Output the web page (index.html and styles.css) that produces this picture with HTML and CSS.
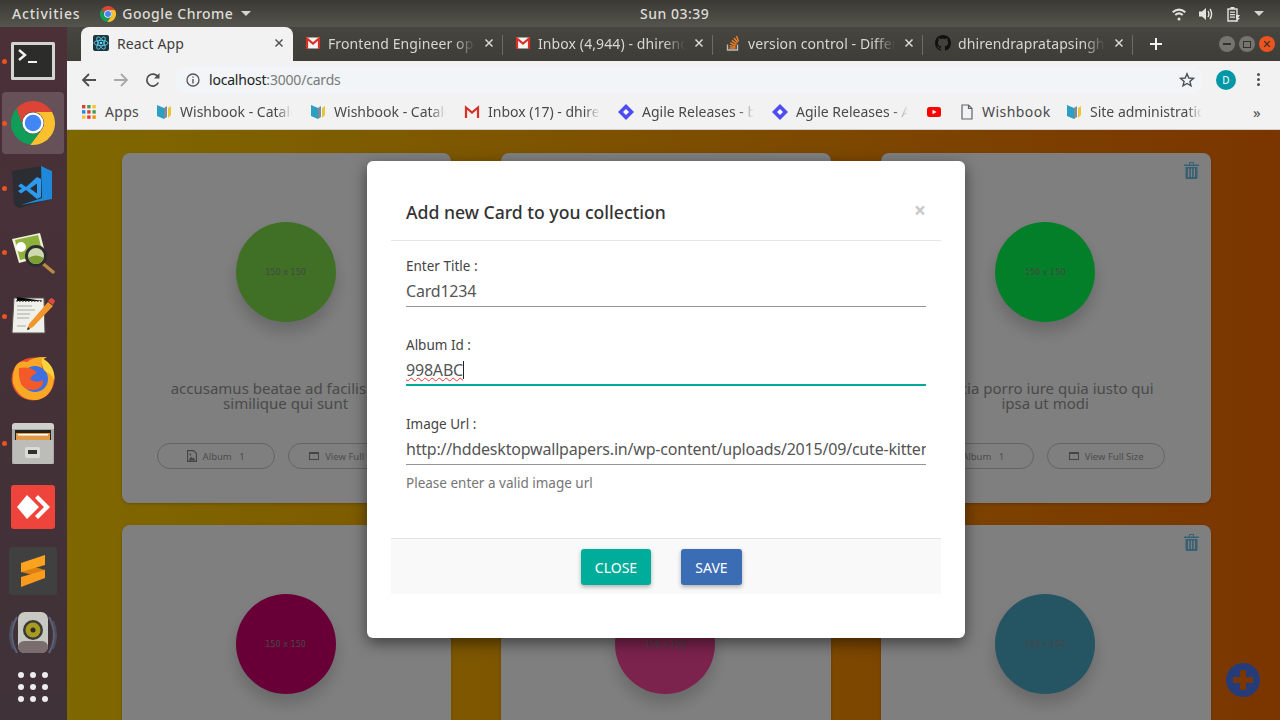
FILE: index.html
```html
<!DOCTYPE html>
<html lang="en">
<head>
<meta charset="utf-8">
<title>React App</title>
<link rel="stylesheet" href="styles.css">
</head>
<body>
<svg class="defs" width="0" height="0" aria-hidden="true">
  <defs>
    <symbol id="chrome" viewBox="0 0 48 48">
      <path fill="#db4437" d="M6 8A24 24 0 0 1 44.8 12H24A12 12 0 0 0 13.6 30Z"/>
      <path fill="#fbc02d" d="M44.8 12A24 24 0 0 1 21 47.8L34.4 30A12 12 0 0 0 24 12Z"/>
      <path fill="#0f9d58" d="M6 8A24 24 0 0 0 21 47.8L34.4 30A12 12 0 0 1 13.6 30Z"/>
      <circle cx="24" cy="24" r="11.5" fill="#fff"/>
      <circle cx="24" cy="24" r="9" fill="#4285f4"/>
    </symbol>
    <symbol id="gmail" viewBox="0 0 16 16">
      <rect x="1" y="2.5" width="14" height="11" fill="#f3f3f3"/>
      <path fill="none" stroke="#d93025" stroke-width="2.2" d="M2 14V3.5L8 8.5L14 3.5V14"/>
    </symbol>
    <symbol id="wishbook" viewBox="0 0 16 16">
      <path fill="#2b9fc4" d="M1 1L8 4V15L1 12Z"/>
      <path fill="#7f8b95" d="M8 4L11 2V13L8 15Z"/>
      <path fill="#e8c53a" d="M12 4L15 2V11L12 14Z"/>
    </symbol>
    <symbol id="jira" viewBox="0 0 16 16">
      <path fill="#4c4cf5" d="M8 0L16 8L8 16L0 8Z"/>
      <path fill="#fff" d="M8 5L11 8L8 11L5 8Z"/>
    </symbol>
    <symbol id="close" viewBox="0 0 10 10">
      <path fill="none" stroke="currentColor" stroke-width="1.5" d="M1.500 1.500L8.500 8.500M8.500 1.500L1.500 8.500"/>
    </symbol>
    <symbol id="trash" viewBox="0 0 15 17">
      <path fill="currentColor" d="M0 2.500H5V.8Q5 0 6 0H9Q10 0 10 .8V2.500H15V4H0ZM6 1V2.500H9V1ZM1.500 5H13.500V15.500Q13.500 17 12 17H3Q1.500 17 1.500 15.500ZM4 6.500V15H5.300V6.500ZM6.900 6.500V15H8.100V6.500ZM9.700 6.500V15H11V6.500Z" fill-rule="evenodd"/>
    </symbol>
    <symbol id="imgfile" viewBox="0 0 10 12">
      <path fill="none" stroke="currentColor" stroke-width="1.1" d="M.6.6H6.500L9.400 3.500V11.400H.6Z"/>
      <path fill="currentColor" d="M1.500 10.500L4 6.500L5.500 8.500L6.500 7.500L8.500 10.500Z"/>
      <circle cx="3.400" cy="4.400" r="1" fill="currentColor"/>
    </symbol>
    <symbol id="window" viewBox="0 0 10 10">
      <path fill="currentColor" fill-rule="evenodd" d="M0 1H10V9H0ZM1 3V8H9V3Z"/>
    </symbol>
  </defs>
</svg>

<header class="topbar">
  <span class="top-activities">Activities</span>
  <span class="top-app">
    <svg class="top-chrome"><use href="#chrome"/></svg>
    Google Chrome
    <i class="caret-down"></i>
  </span>
  <span class="top-clock">Sun 03:39</span>
  <span class="top-tray">
    <svg class="tray-icon" viewBox="0 0 16 16"><path fill="#e4e3de" d="M8 14.500a1.500 1.500 0 1 0 0-3 1.500 1.500 0 0 0 0 3ZM1 5.500Q8-.5 15 5.500L13.600 7Q8 2.500 2.400 7ZM3.600 8.200Q8 4.500 12.400 8.200L11 9.700Q8 7.200 5 9.700Z"/></svg>
    <svg class="tray-icon" viewBox="0 0 16 16"><path fill="#e4e3de" d="M1 5.500H4L8 2V14L4 10.500H1Z"/><path fill="none" stroke="#e4e3de" stroke-width="1.400" d="M10 5Q11.800 8 10 11M12 3Q15.200 8 12 13"/></svg>
    <svg class="tray-icon" viewBox="0 0 16 16"><path fill="none" stroke="#e4e3de" stroke-width="1.400" d="M3 3H12V15H3Z"/><path fill="#e4e3de" d="M5.500 1H9.500V3H5.500ZM5 5.500H10V6.700H5ZM5 8H10V9.200H5ZM5 10.500H10V11.700H5ZM11 9L15 9L13 12H15L11 16L12.400 12.500H11Z"/></svg>
    <i class="caret-down"></i>
  </span>
</header>

<div class="desktop">
  <nav class="dock">
    <div class="dock-item running">
      <svg class="dock-icon" viewBox="0 0 44 44"><rect x="0" y="3" width="44" height="38" rx="1.500" fill="#d4d4d0"/><rect x="3" y="6" width="38" height="32" fill="#2c2c2a"/><path fill="none" stroke="#f2f2f2" stroke-width="2.400" d="M8 11L14 16L8 21"/><rect x="17" y="22" width="9" height="2" fill="#f2f2f2"/></svg>
    </div>
    <div class="dock-item running active">
      <svg class="dock-icon"><use href="#chrome"/></svg>
    </div>
    <div class="dock-item running">
      <svg class="dock-icon" viewBox="0 0 44 44"><path fill="#2b2d33" d="M1 5L31 0L40 4V33L8 42L3 39Z"/><path fill="#1f88d9" d="M30 0L41 5V33L10 39L31 32Z"/><path fill="#2c9bef" fill-rule="evenodd" d="M7 20L10 17.500L15 21L26 11L30 13V31L26 33L15 24L10 27.500L7 25L11 22.500ZM26 17.500L19 22.500L26 27.500Z"/></svg>
    </div>
    <div class="dock-item running">
      <svg class="dock-icon" viewBox="0 0 44 44"><path fill="#eef0d8" d="M1 9L29 3L35 26L8 33Z"/><path fill="#8fb13c" d="M4 10L27 5L32 24L9 30Z"/><circle cx="10" cy="17" r="5" fill="#fff"/><path stroke="#b98a45" stroke-width="3.400" stroke-linecap="round" d="M30 32L42 42"/><circle cx="25" cy="26" r="9.500" fill="#cfd9b0" stroke="#2d2d2d" stroke-width="3"/><path fill="#7d9c33" d="M17 28Q25 23 33 28Q30 34 25 34Q20 34 17 28Z"/></svg>
    </div>
    <div class="dock-item running">
      <svg class="dock-icon" viewBox="0 0 44 44"><path fill="#f0f0ea" stroke="#55534f" d="M3 4H33L34 39H1Z"/><path stroke="#333" stroke-width="1.300" stroke-dasharray="1.600 1.400" d="M6 3V7H32"/><path stroke="#a9a9a4" d="M6 12H21M6 16H24M6 20H19M6 24H18M6 32H15"/><path fill="#f0962a" d="M37 8L42 12L22 33L16 36L18 30Z"/><path fill="#e24a3d" d="M37 7L40 4Q42 4 44 7L42 11Z"/><path fill="#222" d="M16 36L17 33L19 35Z"/></svg>
    </div>
    <div class="dock-item">
      <svg class="dock-icon" viewBox="0 0 44 44"><circle cx="22" cy="22" r="21.500" fill="#ea4a2e"/><path fill="#f9a825" d="M2 26Q8 44 26 43Q41 40 43 22Q43 14 38 8Q39 18 32 14Q28 4 36 0Q24 -1 16 5Q8 3 4 10Q1 18 2 26Z"/><circle cx="24" cy="22" r="13" fill="#3f6fe0"/><path fill="#f4592a" d="M8 11Q20 9 26 16Q21 18 19 22Q25 27 32 23Q33 31 23 33Q11 33 9 24Q7 17 8 11Z"/><path fill="#fbd33c" d="M31 1Q44 8 43.500 23Q40 16 35 15Q30 11 31 1Z"/></svg>
    </div>
    <div class="dock-item running">
      <svg class="dock-icon" viewBox="0 0 44 44"><path fill="#cfcfcb" d="M1 5Q1 2 4 2H40Q43 2 43 5V12H1Z"/><rect x="1" y="8" width="42" height="35" rx="1" fill="#a9a9a5"/><rect x="4" y="9" width="36" height="11" fill="#23231f"/><rect x="5" y="12" width="34" height="7" fill="#e29a49"/><rect x="7" y="13" width="30" height="1.500" fill="#fff"/><path fill="#bcbcb8" d="M2 19H42V41Q42 43 40 43H4Q2 43 2 41Z"/><rect x="14" y="26" width="15" height="11" rx="2" fill="#dadad6"/><rect x="17" y="29" width="9" height="4" fill="#2f2f2d"/></svg>
    </div>
    <div class="dock-item">
      <svg class="dock-icon" viewBox="0 0 44 44"><rect width="44" height="44" rx="3" fill="#ef443b"/><path fill="#fff" d="M16 10L28 22L16 34L6 22Z"/><path fill="#fff" d="M27 10L39 22L27 34L24 31L33 22L24 13Z"/></svg>
    </div>
    <div class="dock-item">
      <svg class="dock-icon-lg" viewBox="0 0 48 48"><rect width="48" height="48" rx="3" fill="#404040"/><path fill="#d9800f" d="M12 16L36 23V31L12 25Z"/><path fill="#fba21f" d="M12 16L36 8V18L12 25Z"/><path fill="#f99b1c" d="M12 30L36 23V31L12 40Z"/></svg>
    </div>
    <div class="dock-item">
      <svg class="dock-icon-lg" viewBox="0 0 48 48"><path fill="none" stroke="#5c6378" stroke-width="2" d="M8 6Q-2 24 8 42M40 6Q50 24 40 42"/><path fill="none" stroke="#4d4f5e" stroke-width="2" d="M4 10Q-2 24 4 38M44 10Q50 24 44 38"/><rect x="9" y="1" width="30" height="41" rx="7" fill="#c9c9c4"/><circle cx="24" cy="19" r="10" fill="#3a3a38"/><circle cx="24" cy="19" r="7.500" fill="#a99a22"/><circle cx="24" cy="19" r="2.500" fill="#2d2d2b"/><rect x="9" y="30" width="30" height="12" rx="6" fill="#7a6d6e"/></svg>
    </div>
    <div class="dock-grid">
      <i></i><i></i><i></i><i></i><i></i><i></i><i></i><i></i><i></i>
    </div>
  </nav>

  <main class="browser">
    <div class="tabstrip">
      <div class="tab tab-active">
        <svg class="fav" viewBox="0 0 16 16"><rect width="16" height="16" rx="2" fill="#20343c"/><g fill="none" stroke="#61dafb" stroke-width=".8"><ellipse cx="8" cy="8" rx="7" ry="2.700"/><ellipse cx="8" cy="8" rx="7" ry="2.700" transform="rotate(60 8 8)"/><ellipse cx="8" cy="8" rx="7" ry="2.700" transform="rotate(120 8 8)"/></g><circle cx="8" cy="8" r="1.300" fill="#61dafb"/></svg>
        <span class="tab-title">React App</span>
        <svg class="tab-x"><use href="#close"/></svg>
      </div>
      <div class="tab">
        <svg class="fav"><use href="#gmail"/></svg>
        <span class="tab-title fade">Frontend Engineer opening</span>
        <svg class="tab-x"><use href="#close"/></svg>
      </div>
      <div class="tab">
        <svg class="fav"><use href="#gmail"/></svg>
        <span class="tab-title fade">Inbox (4,944) - dhirendra</span>
        <svg class="tab-x"><use href="#close"/></svg>
      </div>
      <div class="tab">
        <svg class="fav" viewBox="0 0 16 16"><path fill="none" stroke="#bcbbbb" stroke-width="1.400" d="M2.500 9.500V15H12.500V9.500"/><path fill="none" stroke="#f48024" stroke-width="1.400" d="M4.500 13H10.500M4.600 10.600L10.500 11.600M5.300 8L10.800 10.200M6.800 5.400L11.600 8.800M9 3L12.600 7.600M11.500 1L13.500 6.500"/></svg>
        <span class="tab-title fade">version control - Difference</span>
        <svg class="tab-x"><use href="#close"/></svg>
      </div>
      <div class="tab">
        <svg class="fav" viewBox="0 0 16 16"><path fill="#111" d="M8 0C3.580 0 0 3.580 0 8c0 3.540 2.290 6.530 5.470 7.590.4.070.55-.17.55-.38 0-.19-.01-.82-.01-1.490-2.010.37-2.530-.49-2.690-.94-.09-.23-.48-.94-.82-1.130-.28-.15-.68-.52-.01-.53.63-.01 1.080.58 1.230.82.72 1.210 1.870.87 2.330.66.07-.52.28-.87.51-1.070-1.780-.2-3.640-.89-3.640-3.950 0-.87.31-1.590.82-2.150-.08-.2-.36-1.020.08-2.120 0 0 .67-.21 2.200.82.64-.18 1.320-.27 2-.27.68 0 1.360.09 2 .27 1.530-1.040 2.200-.82 2.200-.82.44 1.100.16 1.920.08 2.120.51.56.82 1.270.82 2.150 0 3.070-1.870 3.750-3.650 3.950.29.25.54.73.54 1.480 0 1.070-.01 1.930-.01 2.200 0 .21.15.46.55.38A8.013 8.013 0 0016 8c0-4.420-3.580-8-8-8z"/></svg>
        <span class="tab-title fade">dhirendrapratapsingh/react</span>
        <svg class="tab-x"><use href="#close"/></svg>
      </div>
      <svg class="tab-plus" viewBox="0 0 14 14"><path stroke="#f2f2f0" stroke-width="2" d="M7 1V13M1 7H13"/></svg>
      <div class="win-btns">
        <span class="win-btn"><i class="win-min"></i></span>
        <span class="win-btn"><i class="win-max"></i></span>
        <span class="win-btn win-close"><svg class="win-x"><use href="#close"/></svg></span>
      </div>
    </div>

    <div class="toolbar">
      <svg class="tool" viewBox="0 0 16 16"><path fill="none" stroke="#4f4f4f" stroke-width="1.800" d="M15 8H2M8 2L2 8L8 14"/></svg>
      <svg class="tool" viewBox="0 0 16 16"><path fill="none" stroke="#a9a9a9" stroke-width="1.800" d="M1 8H14M8 2L14 8L8 14"/></svg>
      <svg class="tool" viewBox="0 0 16 16"><path fill="none" stroke="#4f4f4f" stroke-width="1.700" d="M13.300 10.500A6 6 0 1 1 13 5"/><path fill="#4f4f4f" d="M14.500 1V6.500H9Z"/></svg>
      <div class="omnibox">
        <svg class="omni-info" viewBox="0 0 14 14"><circle cx="7" cy="7" r="6" fill="none" stroke="#555" stroke-width="1.300"/><path fill="#555" d="M6.300 6H7.700V10.500H6.300ZM6.300 3.400H7.700V4.800H6.300Z"/></svg>
        <span class="url"><b class="url-host">localhost</b>:3000/cards</span>
        <svg class="omni-star" viewBox="0 0 16 16"><path fill="none" stroke="#4f4f4f" stroke-width="1.400" d="M8 1.800L9.800 6L14.400 6.400L10.900 9.400L12 13.900L8 11.500L4 13.900L5.100 9.400L1.600 6.400L6.200 6Z"/></svg>
      </div>
      <span class="avatar">D</span>
      <span class="kebab"><i></i><i></i><i></i></span>
    </div>

    <div class="bookmarks">
      <div class="bm bm-apps">
        <svg class="bm-ic" viewBox="0 0 14 14"><path fill="#e53935" d="M0 0h3.400v3.400H0z"/><path fill="#43a047" d="M5.200 0h3.400v3.400H5.200z"/><path fill="#fbc02d" d="M10.400 0h3.400v3.400h-3.400z"/><path fill="#1e88e5" d="M0 5.200h3.400v3.400H0z"/><path fill="#e53935" d="M5.200 5.200h3.400v3.400H5.200z"/><path fill="#43a047" d="M10.400 5.200h3.400v3.400h-3.400z"/><path fill="#fbc02d" d="M0 10.400h3.400v3.400H0z"/><path fill="#e53935" d="M5.200 10.400h3.400v3.400H5.200z"/><path fill="#fb8c00" d="M10.400 10.400h3.400v3.400h-3.400z"/></svg>
        <span>Apps</span>
      </div>
      <div class="bm"><svg class="bm-ic"><use href="#wishbook"/></svg><span class="bm-text">Wishbook - Catalog</span></div>
      <div class="bm"><svg class="bm-ic"><use href="#wishbook"/></svg><span class="bm-text">Wishbook - Catalog</span></div>
      <div class="bm"><svg class="bm-ic"><use href="#gmail"/></svg><span class="bm-text">Inbox (17) - dhirendra</span></div>
      <div class="bm"><svg class="bm-ic"><use href="#jira"/></svg><span class="bm-text">Agile Releases - board</span></div>
      <div class="bm"><svg class="bm-ic"><use href="#jira"/></svg><span class="bm-text">Agile Releases - Agile</span></div>
      <div class="bm bm-yt"><svg class="bm-ic" viewBox="0 0 16 16"><rect x="1" y="3" width="14" height="10" rx="2.500" fill="#f00"/><path fill="#fff" d="M6.500 5.800L10.500 8L6.500 10.200Z"/></svg></div>
      <div class="bm bm-doc"><svg class="bm-ic" viewBox="0 0 14 16"><path fill="none" stroke="#5f6368" stroke-width="1.200" d="M2 1H8.500L12 4.500V15H2ZM8.500 1V4.500H12"/></svg><span>Wishbook</span></div>
      <div class="bm"><svg class="bm-ic"><use href="#wishbook"/></svg><span class="bm-text">Site administration</span></div>
      <span class="bm-more">»</span>
    </div>

    <div class="page">
      <div class="card-grid">
        <article class="card">
          <svg class="card-trash"><use href="#trash"/></svg>
          <div class="thumb thumb-green">150 x 150</div>
          <p class="card-title">accusamus beatae ad facilis cum similique qui sunt</p>
          <div class="card-actions">
            <span class="pill"><svg class="pill-ic"><use href="#imgfile"/></svg>Album &nbsp; 1</span>
            <span class="pill"><svg class="pill-ic"><use href="#window"/></svg>View Full Size</span>
          </div>
        </article>
        <article class="card">
          <svg class="card-trash"><use href="#trash"/></svg>
          <div class="thumb thumb-purple">150 x 150</div>
          <p class="card-title">reprehenderit est deserunt velit ipsam</p>
          <div class="card-actions">
            <span class="pill"><svg class="pill-ic"><use href="#imgfile"/></svg>Album &nbsp; 1</span>
            <span class="pill"><svg class="pill-ic"><use href="#window"/></svg>View Full Size</span>
          </div>
        </article>
        <article class="card">
          <svg class="card-trash"><use href="#trash"/></svg>
          <div class="thumb thumb-lime">150 x 150</div>
          <p class="card-title">officia porro iure quia iusto qui ipsa ut modi</p>
          <div class="card-actions">
            <span class="pill"><svg class="pill-ic"><use href="#imgfile"/></svg>Album &nbsp; 1</span>
            <span class="pill"><svg class="pill-ic"><use href="#window"/></svg>View Full Size</span>
          </div>
        </article>
        <article class="card">
          <svg class="card-trash"><use href="#trash"/></svg>
          <div class="thumb thumb-magenta">150 x 150</div>
        </article>
        <article class="card">
          <svg class="card-trash"><use href="#trash"/></svg>
          <div class="thumb thumb-pink">150 x 150</div>
        </article>
        <article class="card">
          <svg class="card-trash"><use href="#trash"/></svg>
          <div class="thumb thumb-teal">150 x 150</div>
        </article>
      </div>
      <svg class="fab" viewBox="0 0 34 34"><path fill="#4c78f0" fill-rule="evenodd" d="M17 0A17 17 0 1 1 17 34A17 17 0 1 1 17 0ZM14 8Q14 7 15 7H19Q20 7 20 8V14H26Q27 14 27 15V19Q27 20 26 20H20V26Q20 27 19 27H15Q14 27 14 26V20H8Q7 20 7 19V15Q7 14 8 14H14Z"/></svg>
      <div class="overlay">
        <section class="modal">
          <div class="modal-inner">
            <header class="modal-head">
              <h2 class="modal-title">Add new Card to you collection</h2>
              <span class="modal-x">×</span>
            </header>
            <div class="modal-body">
              <div class="field">
                <label class="field-label">Enter Title :</label>
                <div class="field-input">Card1234</div>
              </div>
              <div class="field">
                <label class="field-label">Album Id :</label>
                <div class="field-input field-focus"><span class="misspelled">998ABC</span><i class="text-caret"></i></div>
              </div>
              <div class="field field-last">
                <label class="field-label">Image Url :</label>
                <div class="field-input">http://hddesktopwallpapers.in/wp-content/uploads/2015/09/cute-kitten-images.jpg</div>
                <div class="field-help">Please enter a valid image url</div>
              </div>
            </div>
            <footer class="modal-foot">
              <button class="btn btn-close">CLOSE</button>
              <button class="btn btn-save">SAVE</button>
            </footer>
          </div>
        </section>
      </div>
    </div>
  </main>
</div>
</body>
</html>
```

FILE: styles.css
```css
* { box-sizing: border-box; }
html, body { margin: 0; height: 100%; overflow: hidden; }
body { display: flex; flex-direction: column; height: 720px; font-family: "Noto Sans", "Open Sans", sans-serif; }
.defs { position: absolute; }

.topbar { position: relative; height: 27px; flex: none; display: flex; align-items: center; padding: 0 16px 0 12px; background: linear-gradient(#3a3934, #55544d); color: #dedcd6; font-size: 14px; letter-spacing: .5px; font-weight: 500; }
.top-activities { margin-right: 20px; letter-spacing: .8px; }
.top-app { display: flex; align-items: center; gap: 6px; }
.top-chrome { width: 16px; height: 16px; }
.caret-down { display: inline-block; width: 0; height: 0; border: 5px solid transparent; border-top: 5px solid #d6d5cf; border-bottom: 0; margin-left: 2px; }
.top-clock { position: absolute; left: 640px; }
.top-tray { margin-left: auto; display: flex; align-items: center; gap: 11px; }
.tray-icon { width: 16px; height: 16px; }

.desktop { flex: 1; display: flex; min-height: 0; }
.dock { width: 67px; flex: none; padding-top: 2.5px; display: flex; flex-direction: column; align-items: flex-start; gap: 1.8px; background: linear-gradient(#4b3038, #3f3238); }
.dock-item { position: relative; width: 62px; height: 62px; margin-left: 2px; flex: none; display: flex; align-items: center; justify-content: center; border-radius: 4px; }
.dock-item.running::before { content: ""; position: absolute; left: 0; top: 29px; width: 5px; height: 5px; border-radius: 50%; background: #e95420; }
.dock-item.active { margin-top: -1px; margin-bottom: 1px; background: rgba(255,255,255,.16); }
.dock-icon { width: 44px; height: 44px; }
.dock-icon-lg { width: 48px; height: 48px; }
.dock-grid { display: grid; grid-template-columns: repeat(3, 6px); gap: 6px; margin: 5px 0 0 18px; }
.dock-grid i { width: 6px; height: 6px; border-radius: 50%; background: #ececec; }

.browser { flex: 1; min-width: 0; display: flex; flex-direction: column; }
.tabstrip { height: 34px; flex: none; display: flex; align-items: center; padding-left: 14px; background: linear-gradient(#46453f, #3e3d38); }
.tab { position: relative; width: 210px; height: 34px; display: flex; align-items: center; padding: 0 9px 2px 12px; color: #d8d7d2; font-size: 14px; letter-spacing: .1px; flex: none; }
.tab + .tab::after { content: ""; position: absolute; right: 0; top: 8px; height: 20px; width: 1px; background: #6c6b65; }
.tab-active { width: 212px; background: #f2f2f2; color: #3d3d3d; border-radius: 8px 8px 0 0; }
.fav { width: 16px; height: 16px; flex: none; margin-right: 8px; }
.tab + .tab .fav { margin-right: 7px; }
.tab-title { flex: 1; min-width: 0; white-space: nowrap; overflow: hidden; }
.fade { -webkit-mask-image: linear-gradient(to right, #000 86%, transparent); mask-image: linear-gradient(to right, #000 86%, transparent); }
.tab-x { width: 10px; height: 10px; flex: none; margin-left: 9px; color: #dadad6; }
.tab-active .tab-x { color: #555; }
.tab-plus { width: 14px; height: 14px; margin-left: 16px; flex: none; }
.win-btns { margin-left: auto; margin-right: 5px; display: flex; gap: 4px; }
.win-btn { width: 16px; height: 16px; border-radius: 50%; background: #75746e; display: flex; align-items: center; justify-content: center; }
.win-min { width: 8px; height: 1.5px; background: #33322e; }
.win-max { width: 8px; height: 7px; border: 1px solid #33322e; }
.win-close { background: #e95420; }
.win-x { width: 8px; height: 8px; color: #3b2a22; }

.toolbar { height: 37px; flex: none; display: flex; align-items: center; padding-left: 14px; background: #f2f2f2; }
.tool { width: 16px; height: 16px; margin-right: 16px; flex: none; }
.omnibox { width: 1028px; height: 30px; margin-left: -2px; border-radius: 15px; display: flex; align-items: center; padding: 0 8px 0 11px; background: #f1f5f7; font-size: 14px; flex: none; }
.omni-info { width: 14px; height: 14px; margin-right: 9px; }
.url { color: #7a7a7a; letter-spacing: -.2px; }
.url-host { color: #222; font-weight: 400; }
.omni-star { width: 16px; height: 16px; margin-left: auto; }
.avatar { width: 20px; height: 20px; margin-left: 13px; border-radius: 50%; background: #0097a7; color: #fff; font-size: 10px; display: flex; align-items: center; justify-content: center; flex: none; }
.kebab { margin-left: 21px; display: flex; flex-direction: column; gap: 2px; }
.kebab i { width: 3px; height: 3px; border-radius: 50%; background: #4f4f4f; }

.bookmarks { height: 32px; flex: none; display: flex; align-items: center; padding: 0 0 4px 15px; background: #f2f2f2; border-bottom: 1px solid #cfcfcf; color: #4a4a4a; font-size: 14px; }
.bm { display: flex; align-items: center; flex: none; width: 154px; }
.bm-ic { width: 16px; height: 16px; flex: none; margin-right: 8px; }
.bm-text { width: 112px; white-space: nowrap; overflow: hidden; -webkit-mask-image: linear-gradient(to right, #000 86%, transparent); mask-image: linear-gradient(to right, #000 86%, transparent); }
.bm-apps { width: 74px; letter-spacing: .3px; }
.bm-apps .bm-ic { width: 14px; height: 14px; margin-right: 9px; }
.bm-yt { width: 33px; }
.bm-doc { width: 107px; letter-spacing: .45px; }
.bm-doc .bm-ic { margin-right: 7px; }
.bm-more { margin-left: 33px; font-size: 15px; }

.page { position: relative; flex: 1; min-height: 0; overflow: hidden; padding: 23px 0 0 54.6px; background: linear-gradient(to right, #ffd000, #f76b00); }
.card-grid { display: grid; grid-template-columns: repeat(3, 329.6px); grid-auto-rows: 350px; column-gap: 50.2px; row-gap: 22px; }
.card { position: relative; padding: 69px 35px 0; border-radius: 8px; background: #fff; box-shadow: 0 1px 3px rgba(0,0,0,.2); }
.card-trash { position: absolute; right: 12px; top: 9px; width: 15px; height: 17px; color: #6cc0e8; }
.thumb { width: 100px; height: 100px; margin-left: 79px; border-radius: 50%; display: flex; align-items: center; justify-content: center; font: 9px "DejaVu Sans Condensed", "DejaVu Sans", sans-serif; color: #8c8c8c; box-shadow: 0 10px 16px rgba(0,0,0,.18); }
.thumb-green { background: #7ee04a; }
.thumb-purple { background: #771796; }
.thumb-lime { background: #04fe50; }
.thumb-magenta { background: #d0006e; }
.thumb-pink { background: #f6479a; }
.thumb-teal { background: #4aa8c4; }
.card-title { width: 240px; margin: 59px 0 0 9px; color: #949494; font-size: 15px; line-height: 15px; text-align: center; }
.card-actions { margin-top: 32px; display: flex; gap: 13px; }
.pill { width: 118px; height: 26px; flex: none; display: flex; align-items: center; justify-content: center; gap: 6px; border: 1px solid #c8c8c8; border-radius: 13px; color: #999; font-size: 9.5px; white-space: nowrap; }
.pill-ic { width: 10px; height: 12px; color: #888; }

.fab { position: absolute; left: 1159px; top: 533px; width: 34px; height: 34px; }

.overlay { position: absolute; inset: 0; background: rgba(0,0,0,.5); padding: 31px 0 0 300px; }
.modal { width: 598px; height: 477px; padding: 24px; background: #fff; border-radius: 6px; box-shadow: 0 5px 15px rgba(0,0,0,.5); }
.modal-inner { display: flex; flex-direction: column; height: 409px; }
.modal-head { height: 56px; flex: none; display: flex; justify-content: space-between; padding: 16px 15px 0; border-bottom: 1px solid #e5e5e5; }
.modal-title { margin: 0; font-size: 17.6px; line-height: 22px; font-weight: 500; color: #333; }
.modal-x { font-size: 21px; line-height: 18px; margin: 0; font-weight: 700; color: #c8c8c8; }
.modal-body { flex: 1; padding: 16px 15px 0; }
.field { height: 79px; }
.field-label { display: block; height: 18px; font-size: 13.5px; line-height: 18px; color: #444; }
.field-input { height: 32px; border-bottom: 1px solid #949494; padding-top: 4px; font-size: 16px; letter-spacing: -.2px; line-height: 24px; color: #555; white-space: nowrap; overflow: hidden; }
.field-focus { border-bottom: 2px solid #00ab9b; }
.misspelled { text-decoration: underline wavy #e33; text-decoration-thickness: 1px; text-underline-offset: 1px; }
.text-caret { display: inline-block; width: 1px; height: 18px; background: #222; vertical-align: -3px; }
.field-last { height: auto; }
.field-help { margin-top: 9px; font-size: 13.5px; line-height: 18px; color: #757575; }
.modal-foot { height: 56px; flex: none; display: flex; justify-content: center; align-items: flex-start; gap: 30px; padding: 10px 9px 0 0; background: #f9f9f9; border-top: 1px solid #e5e5e5; }
.btn { height: 36px; padding: 0; border: 0; border-radius: 3px; color: #fff; font: 400 14px "Noto Sans", sans-serif; box-shadow: 0 2px 4px rgba(0,0,0,.3); }
.btn-close { width: 70px; background: #00ac9a; }
.btn-save { width: 61px; background: #3b6db5; }
```
